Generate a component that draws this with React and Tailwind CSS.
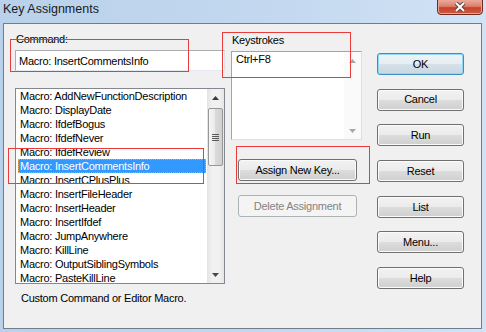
import React from 'react';

const macros = [
  'AddNewFunctionDescription',
  'DisplayDate',
  'IfdefBogus',
  'IfdefNever',
  'IfdefReview',
  'InsertCommentsInfo',
  'InsertCPlusPlus',
  'InsertFileHeader',
  'InsertHeader',
  'InsertIfdef',
  'JumpAnywhere',
  'KillLine',
  'OutputSiblingSymbols',
  'PasteKillLine',
];

// small scroll arrow glyph
const Arrow = ({ up, color }) => (
  <svg width="7" height="4" viewBox="0 0 7 4">
    <polygon points={up ? '0,4 7,4 3.5,0' : '0,0 7,0 3.5,4'} fill={color} />
  </svg>
);

const Button = ({ children, kind }) => {
  if (kind === 'default') {
    return (
      <div className="h-[22px] flex items-center justify-center rounded-[3px] border border-[#3c8fc6] shadow-[inset_0_0_0_1px_#8fd8f8] bg-[linear-gradient(#eef4f8_0%,#e6eef3_50%,#d6e1e8_50%,#c9d7e1_100%)]">
        {children}
      </div>
    );
  }
  if (kind === 'disabled') {
    return (
      <div className="h-[22px] flex items-center justify-center rounded-[3px] border border-[#adb2b5] bg-[#f4f4f4] text-[#838383]">
        {children}
      </div>
    );
  }
  return (
    <div className="h-[22px] flex items-center justify-center rounded-[3px] border border-[#707070] shadow-[inset_0_0_0_1px_#fbfbfb] bg-[linear-gradient(#f2f2f2_0%,#ebebeb_50%,#dddddd_50%,#cfcfcf_100%)]">
      {children}
    </div>
  );
};

export default function App() {
  return (
    <div className="w-[486px] h-[332px] overflow-hidden relative flex flex-col bg-[linear-gradient(90deg,#b9d1ea,#c4d9f0_60%,#d2e3f5)] [font-family:'Liberation_Sans',Arial,sans-serif] text-black">
      {/* title bar */}
      <div className="h-[23px] flex items-start justify-between">
        <span className="pl-[3px] pt-[2px] text-[12.5px] leading-[15px] text-[#1a1a1a]">Key Assignments</span>
        <div className="w-[46px] h-[16px] mr-[3px] -mt-px rounded-b-[4px] border border-[#6e2a1f] flex items-center justify-center bg-[linear-gradient(#e9ab9c_0%,#dc7f6c_45%,#c6432c_55%,#cf5a40_100%)] shadow-[inset_0_0_0_1px_#eaa594]">
          <svg width="12" height="10" viewBox="0 0 12 10">
            <path d="M2 1 L10 9 M10 1 L2 9" stroke="#5b4644" strokeWidth="4" />
            <path d="M2 1 L10 9 M10 1 L2 9" stroke="#ffffff" strokeWidth="2" />
          </svg>
        </div>
      </div>

      {/* dialog body */}
      <div className="ml-[3px] mr-[4px] mb-[3px] flex-1 border border-[#707d8d] bg-[#f0f0f0] flex text-[11px] tracking-[-0.25px]">
        {/* left column */}
        <div className="ml-[11px] w-[210px] flex flex-col">
          <div className="mt-[9px] leading-[13px] pl-[1px]">Command:</div>
          <div className="mt-[4px] h-[21px] border border-[#abadb3] border-b-[#e3e9ef] border-r-[#dbdfe6] bg-white pl-[3px] pt-px flex items-center leading-[13px]">
            Macro: InsertCommentsInfo
          </div>

          <div className="mt-[17px] h-[196px] border border-[#828790] bg-white flex overflow-hidden">
            <div className="flex-1 flex flex-col overflow-hidden">
              {macros.map((m) => (
                <div key={m} className="shrink-0 h-[14px] pl-[2px] pr-px">
                  {m === 'InsertCommentsInfo' ? (
                    <div className="h-[14px] bg-[#3399ff] text-white border border-dotted border-[#d9a35b] pl-px leading-[13px] whitespace-nowrap">
                      Macro: {m}
                    </div>
                  ) : (
                    <div className="h-[14px] pl-[2px] pt-px leading-[13px] whitespace-nowrap">Macro: {m}</div>
                  )}
                </div>
              ))}
            </div>
            {/* scrollbar */}
            <div className="w-[17px] flex flex-col bg-[linear-gradient(90deg,#e3e3e3,#f1f1f1_30%,#f1f1f1_70%,#e6e6e6)]">
              <div className="h-[17px] flex items-center justify-center">
                <Arrow up color="#3a3a3a" />
              </div>
              <div className="mt-[2px] mx-px h-[58px] rounded-[2px] border border-[#979797] bg-[linear-gradient(90deg,#f5f5f5,#e9e9e9_50%,#dadada_50%,#d0d0d0)] flex flex-col items-center justify-center gap-px">
                <div className="w-[7px] h-px bg-[#5a5a5a]" />
                <div className="w-[7px] h-px bg-[#5a5a5a]" />
                <div className="w-[7px] h-px bg-[#5a5a5a]" />
                <div className="w-[7px] h-px bg-[#5a5a5a]" />
              </div>
              <div className="flex-1" />
              <div className="h-[17px] flex items-center justify-center">
                <Arrow color="#4a4a4a" />
              </div>
            </div>
          </div>

          <div className="mt-[8px] pl-[6px] leading-[13px]">Custom Command or Editor Macro.</div>
        </div>

        {/* middle column */}
        <div className="ml-[6px] w-[131px] flex flex-col">
          <div className="mt-[10px] leading-[13px] pl-[1px]">Keystrokes</div>
          <div className="mt-[4px] h-[89px] border border-[#a0a4ab] border-b-[#dbdfe6] border-r-[#dbdfe6] bg-white flex">
            <div className="flex-1 pl-[4px] pt-px leading-[13px]">Ctrl+F8</div>
            <div className="w-[17px] flex flex-col justify-between bg-[#fafafa]">
              <div className="h-[17px] flex items-center justify-center">
                <Arrow up color="#a8a8a8" />
              </div>
              <div className="h-[17px] flex items-center justify-center">
                <Arrow color="#a8a8a8" />
              </div>
            </div>
          </div>
          <div className="mt-[19px] ml-[7px] w-[119px]">
            <Button>Assign New Key...</Button>
          </div>
          <div className="mt-[14px] ml-[7px] w-[119px]">
            <Button kind="disabled">Delete Assignment</Button>
          </div>
        </div>

        {/* right column of buttons */}
        <div className="ml-[15px] w-[87px] pt-[29px] flex flex-col gap-[13.7px]">
          <Button kind="default">OK</Button>
          <Button>Cancel</Button>
          <Button>Run</Button>
          <Button>Reset</Button>
          <Button>List</Button>
          <Button>Menu...</Button>
          <Button>Help</Button>
        </div>
      </div>

      {/* red annotation boxes */}
      <div className="absolute left-[10px] top-[39px] w-[179px] h-[33px] border border-[#ec3b3b]" />
      <div className="absolute left-[222px] top-[32px] w-[129px] h-[46px] border border-[#ec3b3b]" />
      <div className="absolute left-[8px] top-[148px] w-[196px] h-[36px] border border-[#ec3b3b]" />
      <div className="absolute left-[236px] top-[146px] w-[134px] h-[38px] border border-[#ec3b3b]" />
    </div>
  );
}
